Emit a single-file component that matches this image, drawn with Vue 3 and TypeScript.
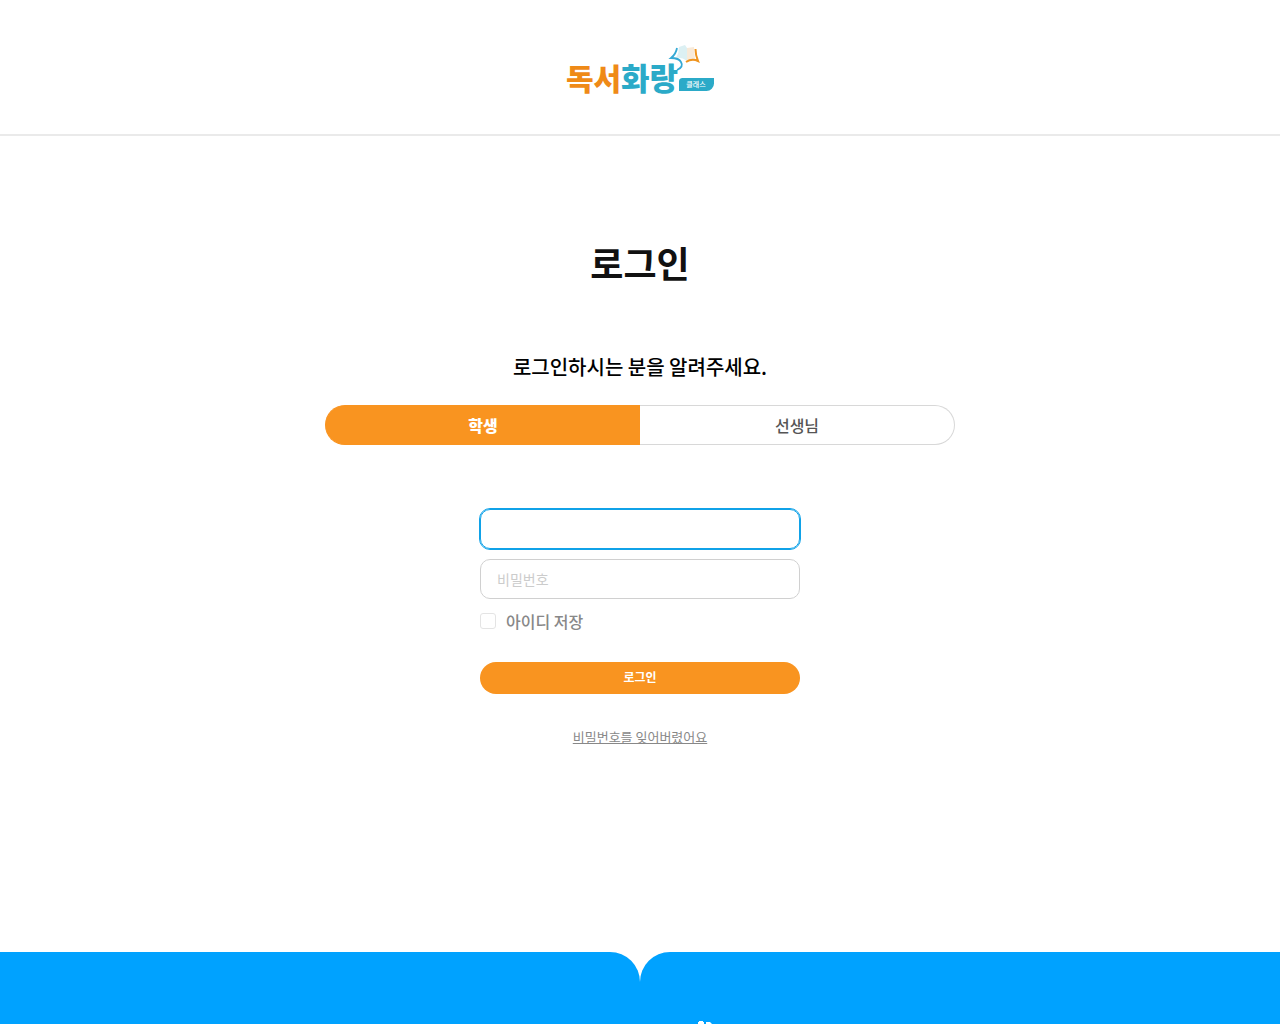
<script setup lang="ts">
import { onMounted, ref } from 'vue'

type Role = 'student' | 'teacher'

const roles: { id: Role; label: string }[] = [
  { id: 'student', label: '학생' },
  { id: 'teacher', label: '선생님' },
]

const role = ref<Role>('student')
const userId = ref('')
const password = ref('')
const saveId = ref(false)
const idField = ref<HTMLInputElement | null>(null)

onMounted(() => idField.value?.focus())
</script>

<template>
  <div class="page">
    <header class="header">
      <a href="#" class="logo" aria-label="독서화랑 클래스">
        <svg width="150" height="62" viewBox="0 0 150 62">
          <text class="word orange" x="1" y="47">독서</text>
          <text class="word teal" x="56" y="47">화랑</text>
          <path d="M117 35h32v5.500a7.500 7.500 0 0 1-7.500 7.500H114v-9.500a3.500 3.500 0 0 1 3-3.500z" fill="#2baac8" />
          <text class="tag" x="131" y="44" text-anchor="middle">클래스</text>
          <path d="M114 4l6-2 2 3v13q-5-4-11-3 3-5 3-11z" fill="#dcf0f3" />
          <path d="M122 5l7-1 1 13q-4-2-8 1z" fill="#f8ead9" />
          <path d="M112 5q-1 6-6 10 8 0 10 4 3 5-4 8" fill="none" stroke="#35a9d5" stroke-width="1.800" />
          <path d="M130.500 6q0 6 2.500 12-6-3-12 1" fill="none" stroke="#ef941f" stroke-width="2" />
        </svg>
      </a>
    </header>

    <main class="main">
      <h1 class="title">로그인</h1>
      <p class="guide">로그인하시는 분을 알려주세요.</p>
      <div class="tabs" role="tablist">
        <button
          v-for="item in roles"
          :key="item.id"
          type="button"
          role="tab"
          class="tab"
          :class="{ active: role === item.id }"
          :aria-selected="role === item.id"
          @click="role = item.id"
        >{{ item.label }}</button>
      </div>

      <form class="form" @submit.prevent>
        <input ref="idField" v-model="userId" class="field" type="text" aria-label="아이디" />
        <input v-model="password" class="field" type="password" placeholder="비밀번호" aria-label="비밀번호" />
        <label class="save">
          <input v-model="saveId" type="checkbox" class="check" />
          <span>아이디 저장</span>
        </label>
        <button type="submit" class="submit">로그인</button>
        <a href="#" class="forgot">비밀번호를 잊어버렸어요</a>
      </form>
    </main>

    <footer class="footer">
      <div class="wing left"></div>
      <div class="wing right">
        <svg class="mark" width="16" height="4" viewBox="0 0 16 4" aria-hidden="true">
          <path d="M0 2h1V1h4v1h1v2H0zM8 2h4l2 2H8z" fill="#fff" />
        </svg>
      </div>
    </footer>
  </div>
</template>

<style>
body {
  margin: 0;
}
</style>

<style scoped>
.page {
  min-height: 100vh;
  display: flex;
  flex-direction: column;
  background: #fff;
  font-family: "Noto Sans CJK KR", "Noto Sans", sans-serif;
}
.page * {
  box-sizing: border-box;
}
button,
input {
  font-family: inherit;
}
.header {
  display: flex;
  justify-content: center;
  padding: 43px 0 29px;
  border-bottom: 2px solid #eaeaea;
}
.logo,
.logo svg {
  display: block;
}
.word {
  font-size: 30px;
  font-weight: 900;
}
.orange {
  fill: #ef8a17;
}
.teal {
  font-size: 31px;
  fill: #2baac8;
}
.tag {
  font-size: 7px;
  font-weight: 500;
  fill: #fff;
}
.main {
  flex: 1;
  display: flex;
  flex-direction: column;
  align-items: center;
  padding-top: 96px;
}
.title {
  margin: 0;
  font-size: 36px;
  line-height: 60px;
  font-weight: 700;
  color: #111;
}
.guide {
  margin: 60px 0 0;
  font-size: 20px;
  line-height: 30px;
  font-weight: 500;
  color: #000;
}
.tabs {
  display: flex;
  width: 630px;
  max-width: 100%;
  height: 40px;
  margin-top: 23px;
}
.tab {
  flex: 1;
  padding: 0;
  border: 1px solid #d8d8d8;
  border-left: 0;
  border-radius: 0 20px 20px 0;
  background: #fff;
  font-size: 16px;
  line-height: 24px;
  font-weight: 500;
  color: #555;
}
.tab:first-child {
  border-left: 1px solid #d8d8d8;
  border-right: 0;
  border-radius: 20px 0 0 20px;
}
.tab.active,
.tab.active:first-child {
  border-color: #f99420;
  background: #f99420;
  font-weight: 900;
  color: #fff;
}
.form {
  display: flex;
  flex-direction: column;
  width: 320px;
  margin-top: 64px;
}
.field {
  height: 40px;
  margin-bottom: 10px;
  padding: 0 16px;
  border: 1px solid #d0d0d0;
  border-radius: 10px;
  background: #fff;
  font-size: 14px;
  color: #222;
}
.field::placeholder {
  color: #ccc;
}
.field:focus {
  border-color: #10a2e8;
  outline: 1px solid #10a2e8;
  caret-color: transparent;
}
.save {
  display: flex;
  align-items: center;
  gap: 10px;
  align-self: flex-start;
  font-size: 16px;
  line-height: 24px;
  font-weight: 500;
  color: #888;
}
.check {
  appearance: none;
  width: 16px;
  height: 16px;
  margin: 0;
  border: 1px solid #e4e4e4;
  border-radius: 3px;
  background: #fff;
}
.check:checked {
  background: #f99420;
}
.submit {
  height: 32px;
  margin-top: 29px;
  padding: 0 0 4px;
  border: 0;
  border-radius: 16px;
  background: #f99420;
  font-size: 12px;
  font-weight: 700;
  color: #fff;
}
.forgot {
  align-self: center;
  margin-top: 34px;
  font-size: 13px;
  line-height: 18px;
  color: #888;
  text-decoration: underline;
}
.footer {
  display: flex;
  height: 72px;
}
.wing {
  flex: 1;
  background: #00a2ff;
}
.left {
  border-top-right-radius: 30px;
}
.right {
  display: flex;
  align-items: flex-end;
  border-top-left-radius: 30px;
}
.mark {
  display: block;
  margin-left: 58px;
}
</style>
